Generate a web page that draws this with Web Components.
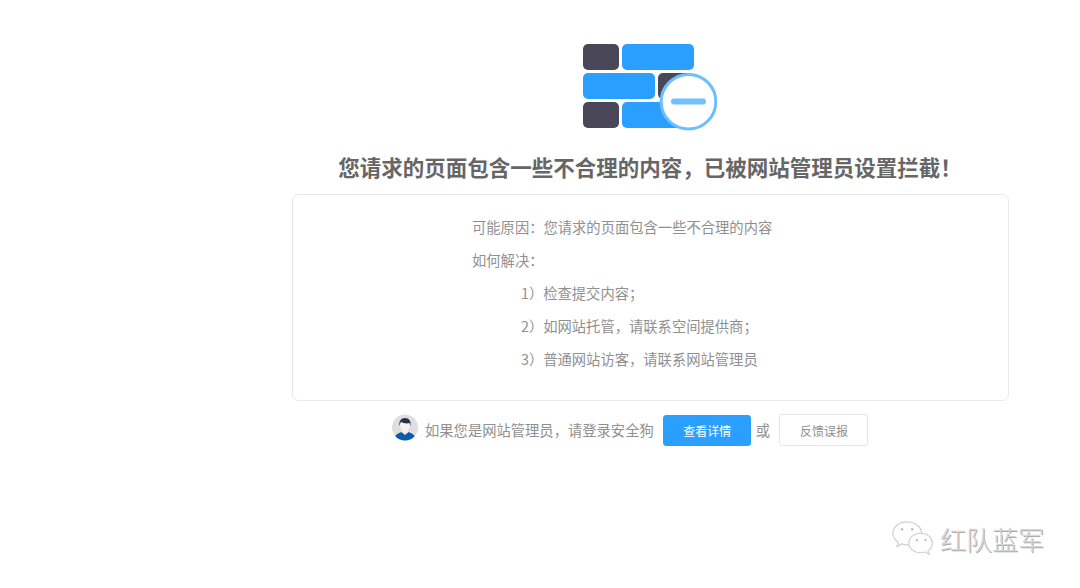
<!DOCTYPE html>
<html lang="zh-CN"><head><meta charset="utf-8"><title>拦截</title>
<style>
html,body{margin:0;padding:0;background:#fff}
body{font-family:"Noto Sans CJK SC","Liberation Sans",sans-serif;height:588px;overflow:hidden;position:relative}
</style></head><body>
<block-page>
  <block-icon slot="icon"></block-icon>
  <span slot="title">您请求的页面包含一些不合理的内容，已被网站管理员设置拦截！</span>
  <reason-card slot="card">
    <reason-line>可能原因：您请求的页面包含一些不合理的内容</reason-line>
    <reason-line>如何解决：</reason-line>
    <reason-line indent>1）检查提交内容；</reason-line>
    <reason-line indent>2）如网站托管，请联系空间提供商；</reason-line>
    <reason-line indent>3）普通网站访客，请联系网站管理员</reason-line>
  </reason-card>
  <admin-bar slot="footer"></admin-bar>
</block-page>
<wechat-mark>红队蓝军</wechat-mark>
<script>
function def(name, html){
  customElements.define(name, class extends HTMLElement{
    constructor(){super();this.attachShadow({mode:'open'}).innerHTML=html;}
  });
}
def('block-page',`<style>
:host{display:flex;flex-direction:column;width:716px;margin-left:292px;padding-top:44px;box-sizing:content-box}
.icon{display:flex;justify-content:center;padding-left:1px}
h1{margin:0;padding:21px 0 0 0;height:42px;box-sizing:content-box;font-size:21.5px;line-height:30px;font-weight:700;color:#666;text-align:center;white-space:nowrap}
</style>
<div class="icon"><slot name="icon"></slot></div>
<h1><slot name="title"></slot></h1>
<slot name="card"></slot>
<slot name="footer"></slot>`);
def('block-icon',`<style>:host{display:block;width:135px;height:87px}svg{display:block}</style>
<svg width="135" height="87" viewBox="0 0 135 87">
<g fill="#4a4858">
<rect x="0" y="0" width="36" height="26" rx="5"/>
<rect x="75" y="29" width="34" height="26" rx="5"/>
<rect x="0" y="58" width="36" height="26" rx="5"/>
</g>
<g fill="#2a9fff">
<rect x="39" y="0" width="72" height="26" rx="5"/>
<rect x="0" y="29" width="72" height="26" rx="5"/>
<rect x="39" y="58" width="62" height="26" rx="5"/>
</g>
<circle cx="105.500" cy="57.700" r="27.300" fill="#fff" stroke="#6cbfff" stroke-width="3"/>
<rect x="88" y="54.500" width="35" height="6" rx="3" fill="#72c0ff"/>
</svg>`);
def('reason-card',`<style>:host{display:block;box-sizing:border-box;width:717px;height:207px;border:1px solid #e8e8e8;border-radius:7px;padding:16px 0 0 179px}</style><slot></slot>`);
def('reason-line',`<style>:host{display:block;height:33px;line-height:32px;font-size:14.3px;color:#909090;white-space:nowrap}:host([indent]){padding-left:49px}</style><slot></slot>`);
def('admin-bar',`<style>
:host{display:flex;align-items:center;margin-top:13px;padding-left:100px;height:32px;font-size:14.3px;color:#909090;white-space:nowrap}
svg{display:block;margin-right:7px;flex:none;margin-top:-5px}
.t{margin-right:9px;position:relative;top:-1px}
.b{box-sizing:border-box;display:flex;align-items:center;justify-content:center;font-size:12px;border-radius:3px;padding-left:1px}
.p{background:#2a9fff;color:#fff;width:88px;height:31px;border:1px solid #2a9fff}
.s{border:1px solid #e6e6e6;color:#909090;height:32px;width:89px}
.o{margin:0 9px 0 5px;position:relative;top:-1px}
</style>
<svg width="26" height="27" viewBox="0 0 26 27">
<defs><clipPath id="c"><circle cx="13" cy="13.500" r="13"/></clipPath></defs>
<circle cx="13" cy="13.500" r="13" fill="#dfdfe1"/>
<g clip-path="url(#c)">
<path d="M2 27c0-6 4-8 8-9l3 1.500 3-1.500c4 1 8 3 8 9z" fill="#0c5bab"/>
<path d="M10 15h6v3.500l-3 2.500-3-2.500z" fill="#f3ece8"/>
<ellipse cx="13" cy="11" rx="5" ry="6.500" fill="#f6efec"/>
<path d="M7.500 12c-.8-5 1.500-8 5.500-8s6.300 3 5.500 8l-1-3c-2 .8-6 .8-8.500-1.200-.6 1-1 2.500-1.500 4.200z" fill="#26324a"/>
</g></svg>
<span class="t">如果您是网站管理员，请登录安全狗</span>
<span class="b p">查看详情</span><span class="o">或</span><span class="b s">反馈误报</span>`);
def('wechat-mark',`<style>
:host{position:absolute;left:890px;top:518px;display:flex;align-items:center;gap:2px;color:#d6d6d6;font-size:26px;line-height:36px;font-weight:300;white-space:nowrap;text-shadow:1px 1px 0 #ababab}
svg{display:block}
</style>
<svg width="48" height="42" viewBox="0 0 42 36" fill="#fff" stroke="#cfcfcf" stroke-width="1">
<path d="M15 3C8 3 2.500 7.500 2.500 13c0 3.300 2 6 4.800 8l-1.200 3.500 4-2.200c1.500.5 3.200.8 5 .8 7 0 12.500-4.500 12.500-10S22 3 15 3z"/>
<path d="M27 13c-6 0-10.500 3.800-10.500 8.500S21 30 27 30c1.300 0 2.600-.2 3.800-.6l3.400 2-1-3c2.400-1.600 3.800-4 3.800-6.900C37 16.800 33 13 27 13z"/>
<g fill="#bdbdbd" stroke="none"><circle cx="10.500" cy="9.500" r="1.100"/><circle cx="19.500" cy="9.500" r="1.100"/><circle cx="23.500" cy="19" r="1"/><circle cx="31" cy="19" r="1"/></g>
</svg><span><slot></slot></span>`);
</script>
</body></html>
